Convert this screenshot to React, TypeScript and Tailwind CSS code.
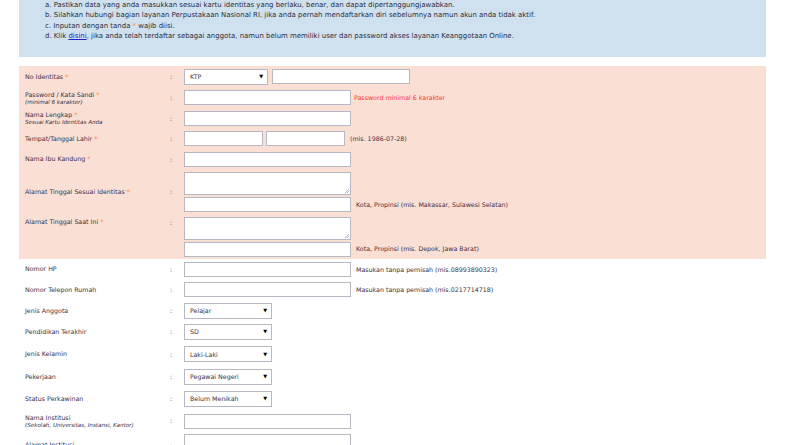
import React from 'react';

const Req = () => <span className="text-[#ff8a3d]"> *</span>;

const inputCls = 'h-[15px] border border-[#b8b8c4] bg-white';

const Select = ({ value, w = 'w-[88px]' }: { value: string; w?: string }) => (
  <div className={`${w} h-[16px] border border-[#b8b8c4] bg-white flex items-center justify-between pl-[5px] pr-[4px]`}>
    <span>{value}</span>
    <span className="text-[5px] text-black">▼</span>
  </div>
);

// textarea box with the little resize grip in the corner
const TextArea = ({ extra = '' }: { extra?: string }) => (
  <div className={`relative w-[167px] h-[23px] border border-[#b8b8c4] bg-white ${extra}`}>
    <svg className="absolute right-[1px] bottom-[1px]" width="5" height="5" viewBox="0 0 5 5">
      <path d="M5 1 L1 5 M5 3 L3 5" stroke="#9a9aa4" strokeWidth="0.7" />
    </svg>
  </div>
);

const Label = ({ text, req, sub }: { text: string; req?: boolean; sub?: string }) => (
  <div className="w-[145px] shrink-0 leading-[8px]">
    <div>
      {text}
      {req && <Req />}
    </div>
    {sub && <div className="italic text-[5.6px] leading-[6.5px]">{sub}</div>}
  </div>
);

const Row = ({
  label,
  children,
  h,
  top,
}: {
  label: React.ReactNode;
  children: React.ReactNode;
  h: string;
  top?: boolean;
}) => (
  <div className={`flex ${top ? 'items-start' : 'items-center'} ${h} pl-[6px]`}>
    {label}
    <div className="w-[14px] shrink-0">:</div>
    <div className="flex items-center gap-[4px]">{children}</div>
  </div>
);

const Hint = ({ children, red }: { children: React.ReactNode; red?: boolean }) => (
  <span className={red ? 'text-[#ff3333] ml-[-1px]' : 'ml-[1px]'}>{children}</span>
);

export default function App() {
  return (
    <div
      className="w-[800px] h-[445px] overflow-hidden bg-white text-[6.3px] text-[#3a3044]"
      style={{ fontFamily: '"DejaVu Sans", Verdana, sans-serif' }}
    >
      <div className="ml-[19px] w-[747px]">
        {/* info box */}
        <div className="h-[57px] bg-[#cfe0ee] pl-[26px] text-[6.95px] leading-[10.4px] text-[#2e2e40]">
          <div>a. Pastikan data yang anda masukkan sesuai kartu identitas yang berlaku, benar, dan dapat dipertanggungjawabkan.</div>
          <div>b. Silahkan hubungi bagian layanan Perpustakaan Nasional RI, jika anda pernah mendaftarkan diri sebelumnya namun akun anda tidak aktif.</div>
          <div>
            c. Inputan dengan tanda <span className="text-[#ff8a3d]">*</span> wajib diisi.
          </div>
          <div>
            d. Klik <span className="text-[#2222cc] underline">disini</span>, jika anda telah terdaftar sebagai anggota, namun belum memiliki user dan password akses layanan Keanggotaan Online.
          </div>
        </div>

        {/* required fields */}
        <div className="mt-[9px] h-[193px] bg-[#fadfd5]">
          <Row label={<Label text="No Identitas" req />} h="h-[21.5px]">
            <Select value="KTP" w="w-[84px]" />
            <div className={`${inputCls} w-[138px]`} />
          </Row>
          <Row label={<Label text="Password / Kata Sandi" req sub="(minimal 6 karakter)" />} h="h-[20.5px]">
            <div className={`${inputCls} w-[167px]`} />
            <Hint red>Password minimal 6 karakter</Hint>
          </Row>
          <Row label={<Label text="Nama Lengkap" req sub="Sesuai Kartu Identitas Anda" />} h="h-[20.5px]">
            <div className={`${inputCls} w-[167px]`} />
          </Row>
          <Row label={<Label text="Tempat/Tanggal Lahir" req />} h="h-[20.5px]">
            <div className={`${inputCls} w-[79px] mr-[-1px]`} />
            <div className={`${inputCls} w-[79px]`} />
            <Hint>(mis. 1986-07-28)</Hint>
          </Row>
          <Row label={<Label text="Nama Ibu Kandung" req />} h="h-[20.5px]">
            <div className={`${inputCls} w-[167px]`} />
          </Row>
          <Row label={<Label text="Alamat Tinggal Sesuai Identitas" req />} h="h-[45px]">
            <div className="flex flex-col gap-[1.5px]">
              <TextArea />
              <div className="flex items-center gap-[4px]">
                <div className={`${inputCls} w-[167px]`} />
                <Hint>Kota, Propinsi (mis. Makassar, Sulawesi Selatan)</Hint>
              </div>
            </div>
          </Row>
          <Row label={<Label text="Alamat Tinggal Saat Ini" req />} h="h-[44.5px] pt-[3px]" top>
            <div className="flex flex-col gap-[1.5px] mt-[-0.5px]">
              <TextArea />
              <div className="flex items-center gap-[4px]">
                <div className={`${inputCls} w-[167px]`} />
                <Hint>Kota, Propinsi (mis. Depok, Jawa Barat)</Hint>
              </div>
            </div>
          </Row>
        </div>

        {/* optional fields */}
        <Row label={<Label text="Nomor HP" />} h="h-[20.5px]">
          <div className={`${inputCls} w-[167px]`} />
          <Hint>Masukan tanpa pemisah (mis.08993890323)</Hint>
        </Row>
        <Row label={<Label text="Nomor Telepon Rumah" />} h="h-[20.5px]">
          <div className={`${inputCls} w-[167px]`} />
          <Hint>Masukan tanpa pemisah (mis.0217714718)</Hint>
        </Row>
        <Row label={<Label text="Jenis Anggota" />} h="h-[21px]">
          <Select value="Pelajar" />
        </Row>
        <Row label={<Label text="Pendidikan Terakhir" />} h="h-[22.3px]">
          <Select value="SD" />
        </Row>
        <Row label={<Label text="Jenis Kelamin" />} h="h-[22.3px]">
          <Select value="Laki-Laki" />
        </Row>
        <Row label={<Label text="Pekerjaan" />} h="h-[22.3px]">
          <Select value="Pegawai Negeri" />
        </Row>
        <Row label={<Label text="Status Perkawinan" />} h="h-[22.3px]">
          <Select value="Belum Menikah" />
        </Row>
        <Row label={<Label text="Nama Institusi" sub="(Sekolah, Universitas, Instansi, Kantor)" />} h="h-[22px]">
          <div className={`${inputCls} w-[167px]`} />
        </Row>
        <Row label={<Label text="Alamat Institusi" />} h="h-[40px] pt-[9px]" top>
          <TextArea extra="mt-[-7px]" />
        </Row>
      </div>
    </div>
  );
}
